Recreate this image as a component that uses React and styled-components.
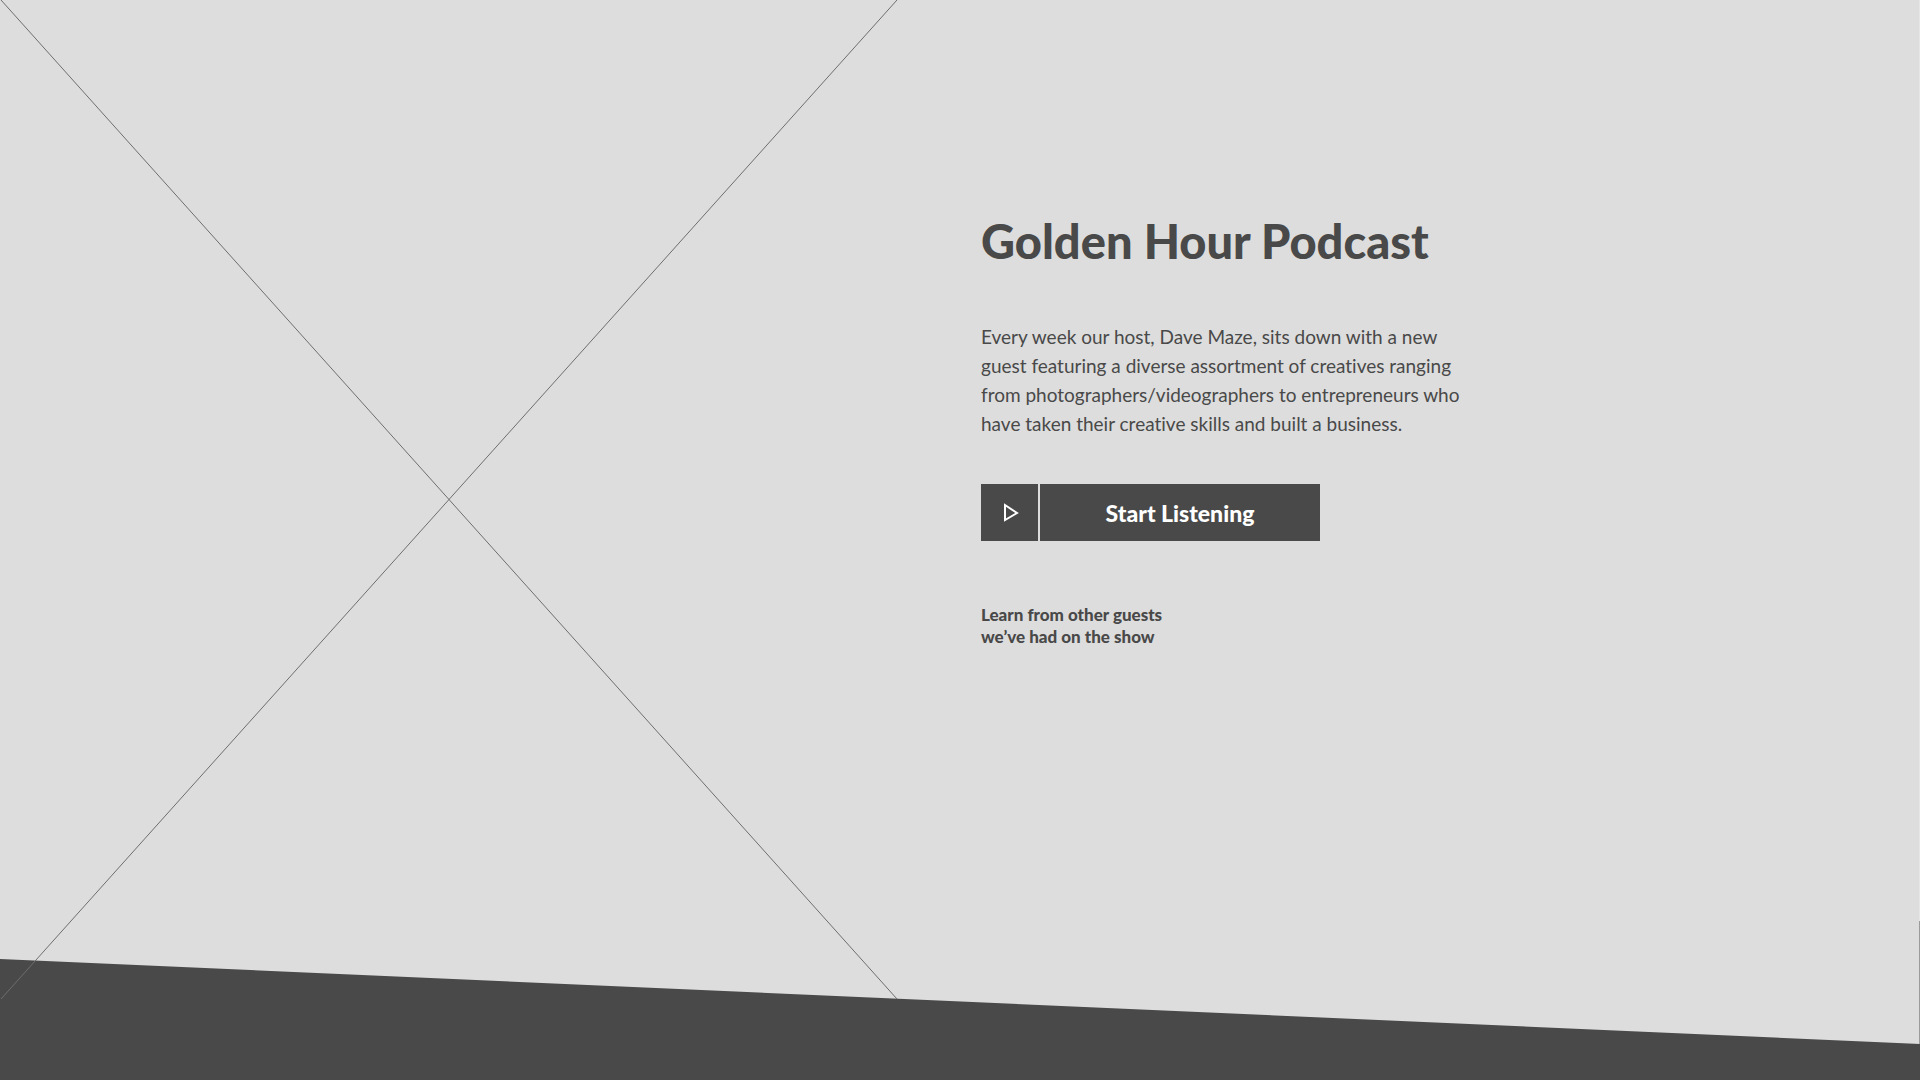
import React from "react";
import styled, { createGlobalStyle } from "styled-components";

const GlobalStyle = createGlobalStyle`
  *, *::before, *::after { box-sizing: border-box; }
  body {
    margin: 0;
    background: #dddddd;
    color: #494949;
    font-family: Lato, "Open Sans", sans-serif;
    font-variant-ligatures: none;
  }
`;

const Hero = styled.main`
  position: relative;
  display: grid;
  grid-template-columns: 7fr 8fr;
  min-height: 100vh;
`;

const EdgeRule = styled.div`
  position: absolute;
  top: 0;
  right: 0;
  bottom: 0;
  width: 1px;
  background: linear-gradient(to top, #9b9b9b 159px, #e6e6e6 159px);
`;

const Slope = styled.div`
  position: absolute;
  left: 0;
  right: 0;
  bottom: 0;
  height: 121px;
  background: #494949;
  clip-path: polygon(0 0, 100% 85px, 100% 100%, 0 100%);
`;

const Artwork = styled.svg`
  position: relative;
  display: block;
  width: 100%;
  height: calc(100% - 81px);
  margin-left: 1px;
  overflow: visible;
`;

const Content = styled.section`
  display: flex;
  flex-direction: column;
  align-items: flex-start;
  padding: 211px 40px 160px 85px;
`;

const Title = styled.h1`
  margin: 0;
  font-size: 47px;
  line-height: 60px;
  font-weight: 900;
`;

const Intro = styled.p`
  margin: 51px 0 0;
  font-size: 19px;
  line-height: 29px;
`;

const ListenButton = styled.button`
  display: flex;
  align-items: stretch;
  width: 339px;
  height: 57px;
  margin: 46px 0 0;
  padding: 0;
  border: 0;
  background: #494949;
  color: #ffffff;
  font: inherit;
  font-size: 23px;
  font-weight: 900;
  cursor: pointer;
`;

const IconCell = styled.span`
  display: flex;
  align-items: center;
  justify-content: center;
  width: 59px;
  border-right: 2px solid #dddddd;
`;

const ButtonLabel = styled.span`
  display: flex;
  flex: 1;
  align-items: center;
  justify-content: center;
`;

const GuestNote = styled.p`
  margin: 63px 0 0;
  font-size: 17px;
  line-height: 22px;
  font-weight: 900;
`;

export default function App() {
  return (
    <>
      <GlobalStyle />
      <Hero>
        <EdgeRule />
        <Slope />
        <Artwork viewBox="0 0 100 100" preserveAspectRatio="none" aria-hidden="true">
          <path
            d="M0 0 100 100M100 0 0 100"
            fill="none"
            stroke="#6e6e6e"
            strokeWidth="1"
            vectorEffect="non-scaling-stroke"
          />
        </Artwork>
        <Content>
          <Title>Golden Hour Podcast</Title>
          <Intro>
            Every week our host, Dave Maze, sits down with a new
            <br />
            guest featuring a diverse assortment of creatives ranging
            <br />
            from photographers/videographers to entrepreneurs who
            <br />
            have taken their creative skills and built a business.
          </Intro>
          <ListenButton type="button">
            <IconCell>
              <svg width="20" height="20" viewBox="0 0 20 20" aria-hidden="true">
                <path d="M5 2 17 10 5 17Z" fill="none" stroke="#ffffff" strokeWidth="2" />
              </svg>
            </IconCell>
            <ButtonLabel>Start Listening</ButtonLabel>
          </ListenButton>
          <GuestNote>
            Learn from other guests
            <br />
            we’ve had on the show
          </GuestNote>
        </Content>
      </Hero>
    </>
  );
}
